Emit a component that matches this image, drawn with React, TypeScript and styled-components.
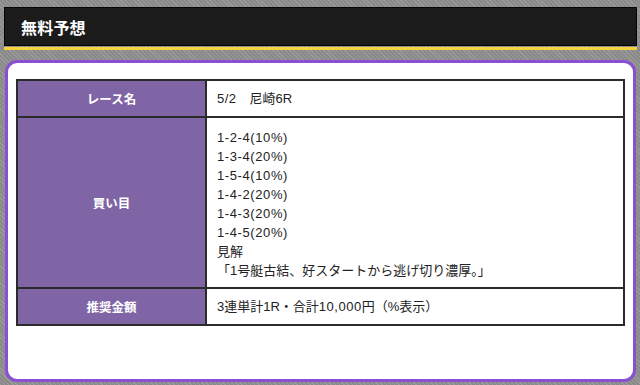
import React from 'react';
import styled, { createGlobalStyle } from 'styled-components';

const GlobalStyle = createGlobalStyle`
  html, body {
    margin: 0;
    padding: 0;
  }
  body {
    width: 640px;
    height: 385px;
    overflow: hidden;
    background-color: #8f8f8f;
    background-image: repeating-linear-gradient(
      45deg,
      #9a9a9a 0px,
      #9a9a9a 1px,
      #8a8a8a 1px,
      #8a8a8a 3px
    );
    font-family: "Liberation Sans", "Noto Sans CJK JP", sans-serif;
  }
`;

const Page = styled.div`
  padding: 7px 3px 0 4px;
`;

const Header = styled.header`
  display: flex;
  align-items: center;
  height: 37px;
  padding-left: 16px;
  background: #1b1b1b;
  border: 1px solid #050505;
`;

const Title = styled.h2`
  margin: 0;
  color: #fff;
  font-family: "Noto Sans CJK JP", sans-serif;
  font-size: 16px;
  font-weight: 700;
  letter-spacing: 0.2px;
`;

const Accent = styled.div`
  height: 3px;
  margin-top: 1px;
  background: #f4d33e;
`;

const Card = styled.section`
  box-sizing: border-box;
  height: 322px;
  margin: 10px 1px 0 1px;
  padding: 16px 8px 0 8px;
  background: #fff;
  border: 3px solid #8a4fd2;
  border-radius: 12px;
`;

const Table = styled.table`
  width: 100%;
  border-collapse: collapse;
  border: 2px solid #2b2b2b;
  font-size: 13px;
`;

const Label = styled.th`
  width: 185px;
  background: #7f65a6;
  color: #fff;
  border: 2px solid #2b2b2b;
  font-family: "Noto Sans CJK JP", sans-serif;
  font-weight: 700;
  font-size: 12.5px;
  text-align: center;
  vertical-align: middle;
`;

const Value = styled.td<{ $tall?: boolean }>`
  height: ${p => (p.$tall ? 171 : 37)}px;
  box-sizing: border-box;
  padding: ${p => (p.$tall ? '9px 10px 7px' : '0 10px')};
  border: 2px solid #2b2b2b;
  color: #222;
  line-height: 19px;
  vertical-align: middle;
`;

const Line = styled.div``;

const Pick = styled.div`
  letter-spacing: 0.6px;
`;

const Num = styled.span`
  letter-spacing: 0.5px;
`;

const picks = [
  '1-2-4(10%)',
  '1-3-4(20%)',
  '1-5-4(10%)',
  '1-4-2(20%)',
  '1-4-3(20%)',
  '1-4-5(20%)',
];

export default function App() {
  return (
    <>
      <GlobalStyle />
      <Page>
        <Header>
          <Title>無料予想</Title>
        </Header>
        <Accent />
        <Card>
          <Table>
            <tbody>
              <tr>
                <Label>レース名</Label>
                <Value>
                  <Num>5/2</Num>　尼崎6R
                </Value>
              </tr>
              <tr>
                <Label>買い目</Label>
                <Value $tall>
                  {picks.map(p => (
                    <Pick key={p}>{p}</Pick>
                  ))}
                  <Line>見解</Line>
                  <Line>「1号艇古結、好スタートから逃げ切り濃厚。」</Line>
                </Value>
              </tr>
              <tr>
                <Label>推奨金額</Label>
                <Value>
                  3連単計1R・合計<Num>10,000</Num>円（%表示）
                </Value>
              </tr>
            </tbody>
          </Table>
        </Card>
      </Page>
    </>
  );
}
